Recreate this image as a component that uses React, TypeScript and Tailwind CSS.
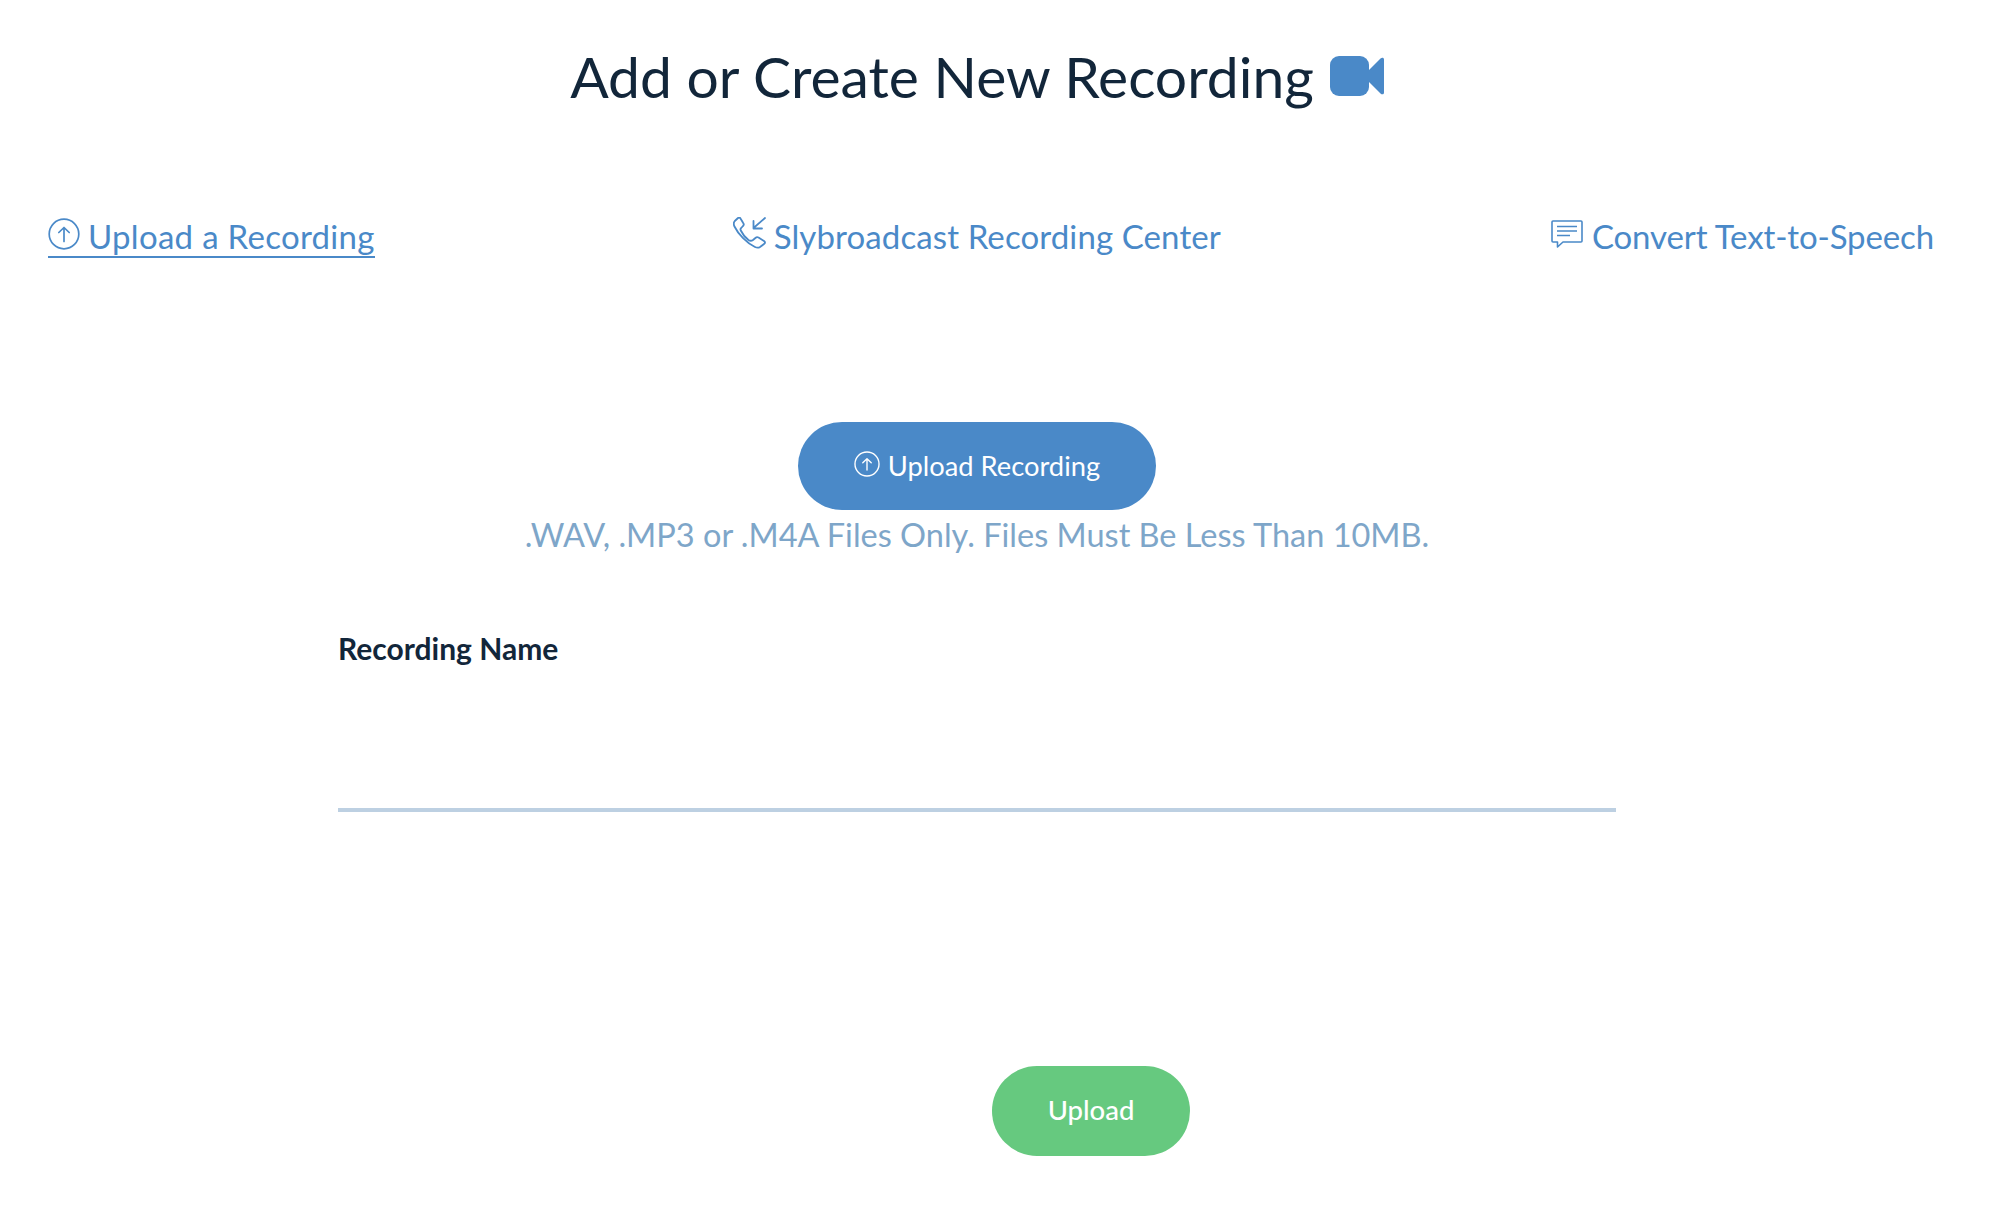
export default function App() {
  const up = (size: number, color: string) => (
    <svg width={size} height={size} viewBox="0 0 32 32" fill="none" stroke={color} strokeWidth="1.7" strokeLinecap="round" strokeLinejoin="round" className="shrink-0 -mt-[5px]">
      <circle cx="16" cy="16" r="14.8" />
      <path d="M16 23.5V9.5M10.8 14.5 16 9.5l5.2 5" />
    </svg>
  );
  return (
    <div className="w-[1954px] h-[1214px] bg-white flex flex-col font-['Lato','Liberation_Sans',sans-serif] overflow-hidden">
      <h1 className="mt-[41px] h-[70px] flex items-center justify-center gap-[16px] text-[57px] leading-[70px] font-normal text-[#12263a]">
        <span>Add or Create New Recording</span>
        <svg width="54" height="40" viewBox="0 0 54 40" fill="#4a89c8" className="shrink-0">
          <rect x="0" y="0" width="39" height="40" rx="9" />
          <path d="M38 15 50.500 2.500C52 1 54 1.500 54 3.500v33c0 2-2 2.500-3.500 1L38 25z" />
        </svg>
      </h1>
      <nav className="mt-[105px] pl-[48px] pr-[20px] flex justify-between items-start text-[33px] leading-[40px] text-[#4a89c8]">
        <a className="flex items-center gap-[8px] h-[42px] border-b-2 border-[#4a89c8] tracking-[0.29px]">
          {up(32, "#4a89c8")}
          <span>Upload a Recording</span>
        </a>
        <a className="ml-[28px] flex items-center gap-[7px] h-[42px] pb-[2px] tracking-[0.11px]">
          <svg width="34" height="33" viewBox="0 0 34 33" fill="none" stroke="#4a89c8" strokeWidth="1.8" strokeLinecap="round" strokeLinejoin="round" className="shrink-0 -mt-[5px]">
            <path d="M5 1 1.800 4C.5 5.500.5 7.500 1.500 9.500 5 17 14 26 22 30c2 1 3.500 1 5 0l4-3c1.500-1 1.300-2 0-3l-5.500-3.500c-1-.5-2-.5-2.800.2L20 23c-1.500 1-3 1-4.500 0-3.500-2.500-6-6-7.700-9.500-.5-1-.3-2 .4-2.500L10 9c1-1 1-2 .2-3L7.500 1.500C7 .5 6 .2 5 1Z" />
            <path d="M32 1 20.500 11M20.500 4v7.500H29" />
          </svg>
          <span>Slybroadcast Recording Center</span>
        </a>
        <a className="flex items-center gap-[9px] h-[42px] pb-[2px] tracking-[-0.12px]">
          <svg width="32" height="28" viewBox="0 0 32 28" fill="none" stroke="#4a89c8" strokeWidth="1.6" strokeLinejoin="round" className="shrink-0 -mt-[5px]">
            <path d="M2 1h28a1 1 0 0 1 1 1v19a1 1 0 0 1-1 1H12l-5.500 5v-5H2a1 1 0 0 1-1-1V2a1 1 0 0 1 1-1Z" />
            <path d="M6 6.500h20M6 11h20M6 15.500h13" />
          </svg>
          <span>Convert Text-to-Speech</span>
        </a>
      </nav>
      <div className="mt-[164px] flex flex-col items-center">
        <button className="w-[358px] h-[88px] rounded-full bg-[#4a89c8] text-white text-[27.3px] flex items-center justify-center gap-[8px]">
          {up(26, "#ffffff")}
          <span>Upload Recording</span>
        </button>
        <p className="mt-[5px] text-[32.5px] leading-[40px] text-[#7ea6c9]">.WAV, .MP3 or .M4A Files Only. Files Must Be Less Than 10MB.</p>
      </div>
      <div className="mt-[75px] ml-[338px] w-[1278px]">
        <label className="block text-[30px] leading-[36px] font-bold text-[#12263a]">Recording Name</label>
        <div className="mt-[142px] h-[4px] bg-[#bdd0e2]" />
      </div>
      <button className="mt-[254px] ml-[992px] w-[198px] h-[90px] pb-[2px] rounded-full bg-[#66c97f] text-white text-[27.5px] font-medium">Upload</button>
    </div>
  );
}
